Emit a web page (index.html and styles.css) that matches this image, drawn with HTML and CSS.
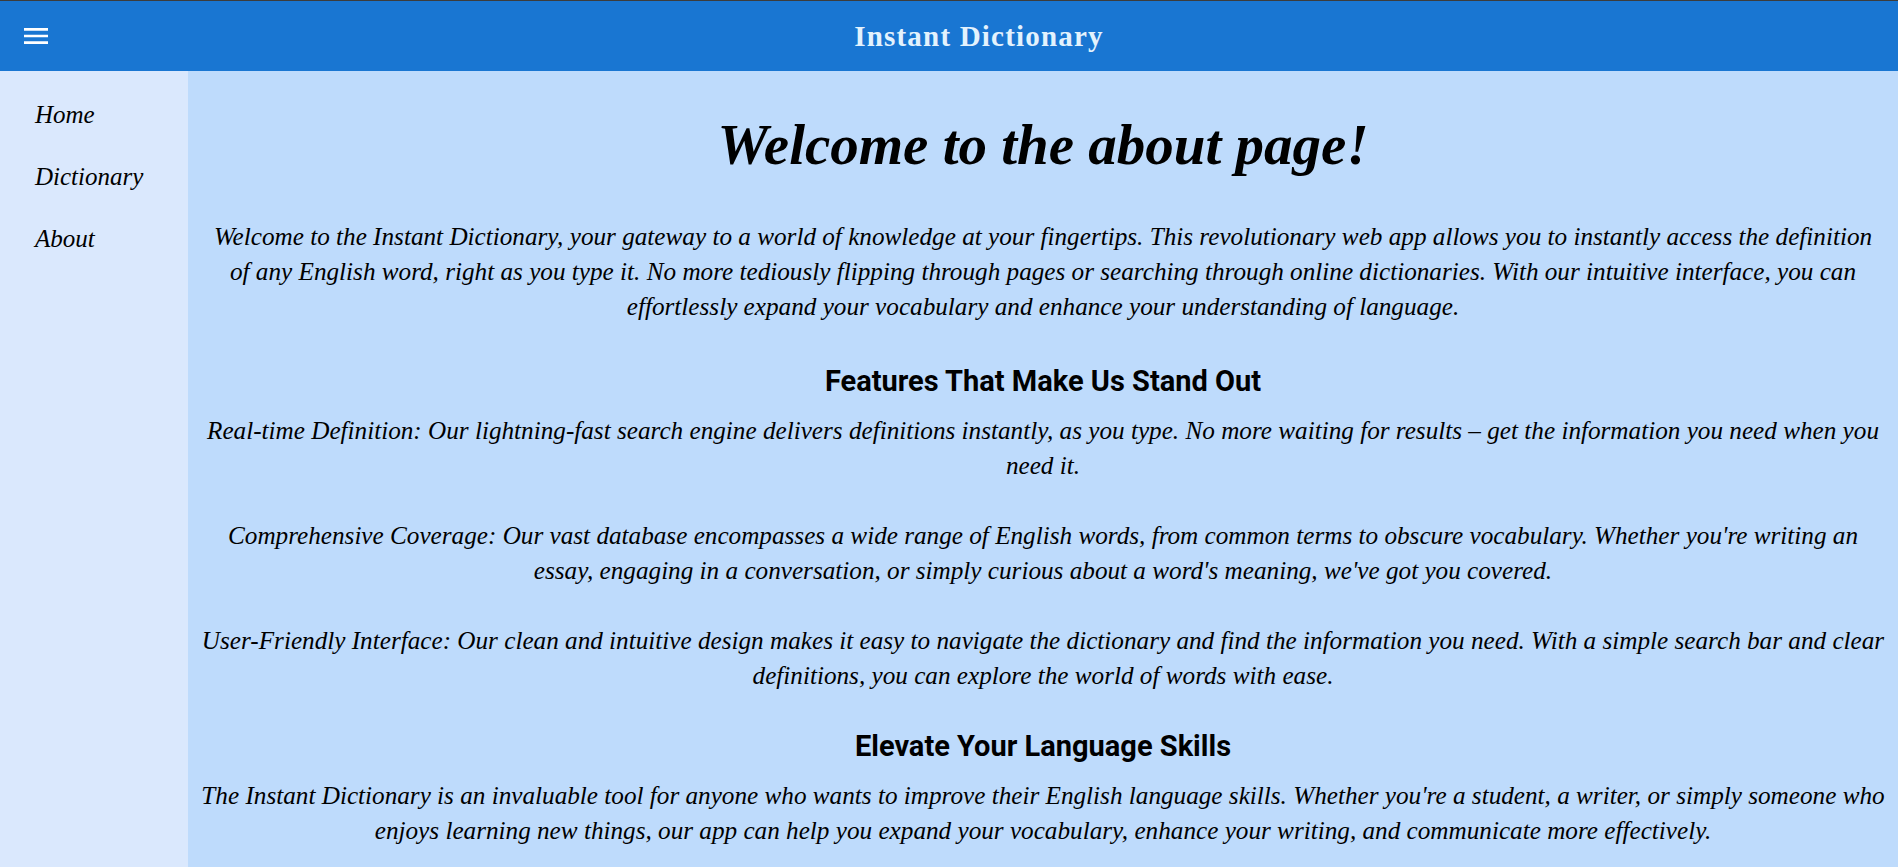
FILE: index.html
```html
<!DOCTYPE html>
<html lang="en">
<head>
<meta charset="utf-8">
<title>Instant Dictionary</title>
<link rel="stylesheet" href="styles.css">
</head>
<body>
<div class="app">
  <header class="topbar">
    <button class="menu-btn" aria-label="menu">
      <svg viewBox="0 0 24 24" width="32" height="32"><path fill="#fff" d="M3 18h18v-2H3v2zm0-5h18v-2H3v2zm0-7v2h18V6H3z"/></svg>
    </button>
    <div class="brand">Instant Dictionary</div>
  </header>
  <div class="body">
    <nav class="sidebar">
      <a class="nav-link" href="#">Home</a>
      <a class="nav-link" href="#">Dictionary</a>
      <a class="nav-link" href="#">About</a>
    </nav>
    <main class="content">
      <h1 class="page-title">Welcome to the about page!</h1>
      <p class="text intro">Welcome to the Instant Dictionary, your gateway to a world of knowledge at your fingertips. This revolutionary web app allows you to instantly access the definition of any English word, right as you type it. No more tediously flipping through pages or searching through online dictionaries. With our intuitive interface, you can effortlessly expand your vocabulary and enhance your understanding of language.</p>
      <h2 class="section-title">Features That Make Us Stand Out</h2>
      <p class="text">Real-time Definition: Our lightning-fast search engine delivers definitions instantly, as you type. No more waiting for results – get the information you need when you need it.</p>
      <p class="text">Comprehensive Coverage: Our vast database encompasses a wide range of English words, from common terms to obscure vocabulary. Whether you're writing an essay, engaging in a conversation, or simply curious about a word's meaning, we've got you covered.</p>
      <p class="text">User-Friendly Interface: Our clean and intuitive design makes it easy to navigate the dictionary and find the information you need. With a simple search bar and clear definitions, you can explore the world of words with ease.</p>
      <h2 class="section-title">Elevate Your Language Skills</h2>
      <p class="text">The Instant Dictionary is an invaluable tool for anyone who wants to improve their English language skills. Whether you're a student, a writer, or simply someone who enjoys learning new things, our app can help you expand your vocabulary, enhance your writing, and communicate more effectively.</p>
    </main>
  </div>
</div>
</body>
</html>
```
FILE: styles.css
```css
* { box-sizing: border-box; }
html, body { margin: 0; padding: 0; height: 100%; overflow: hidden; }
body {
  font-family: "Liberation Serif", "Times New Roman", serif;
  background: #3c3c3c;
  color: #000;
}
.app {
  display: flex;
  flex-direction: column;
  height: 100%;
  padding-top: 1px;
}
.topbar {
  flex: 0 0 70px;
  height: 70px;
  background: #1976d2;
  display: flex;
  align-items: center;
  padding-left: 20px;
}
.menu-btn {
  width: 32px;
  height: 32px;
  padding: 0;
  border: 0;
  background: transparent;
  display: flex;
}
.brand {
  flex: 1;
  text-align: center;
  color: #e3f2fd;
  font-weight: bold;
  font-size: 29px;
  letter-spacing: 1.2px;
  padding-left: 8px;
  padding-top: 1px;
}
.body {
  flex: 1;
  display: flex;
  min-height: 0;
}
.sidebar {
  flex: 0 0 188px;
  background: #dae8fd;
  display: flex;
  flex-direction: column;
  padding: 13px 0 0 35px;
}
.nav-link {
  color: #000;
  text-decoration: none;
  font-style: italic;
  font-size: 25px;
  line-height: 62px;
  height: 62px;
}
.content {
  flex: 1;
  background: #bedbfc;
  padding: 46px 11px 0;
  text-align: center;
  overflow: hidden;
}
.page-title {
  margin: 0 0 46px;
  font-style: italic;
  font-weight: bold;
  font-size: 57px;
  line-height: 56px;
}
.text {
  margin: 0 0 35px;
  font-style: italic;
  font-size: 25.2px;
  line-height: 35px;
}
.text.intro {
  padding: 0 8px;
  margin-bottom: 40px;
}
.section-title {
  margin: 36px 0 15px;
  font-family: Roboto, "Noto Sans", sans-serif;
  font-weight: 700;
  font-size: 29px;
  line-height: 34px;
}
```
